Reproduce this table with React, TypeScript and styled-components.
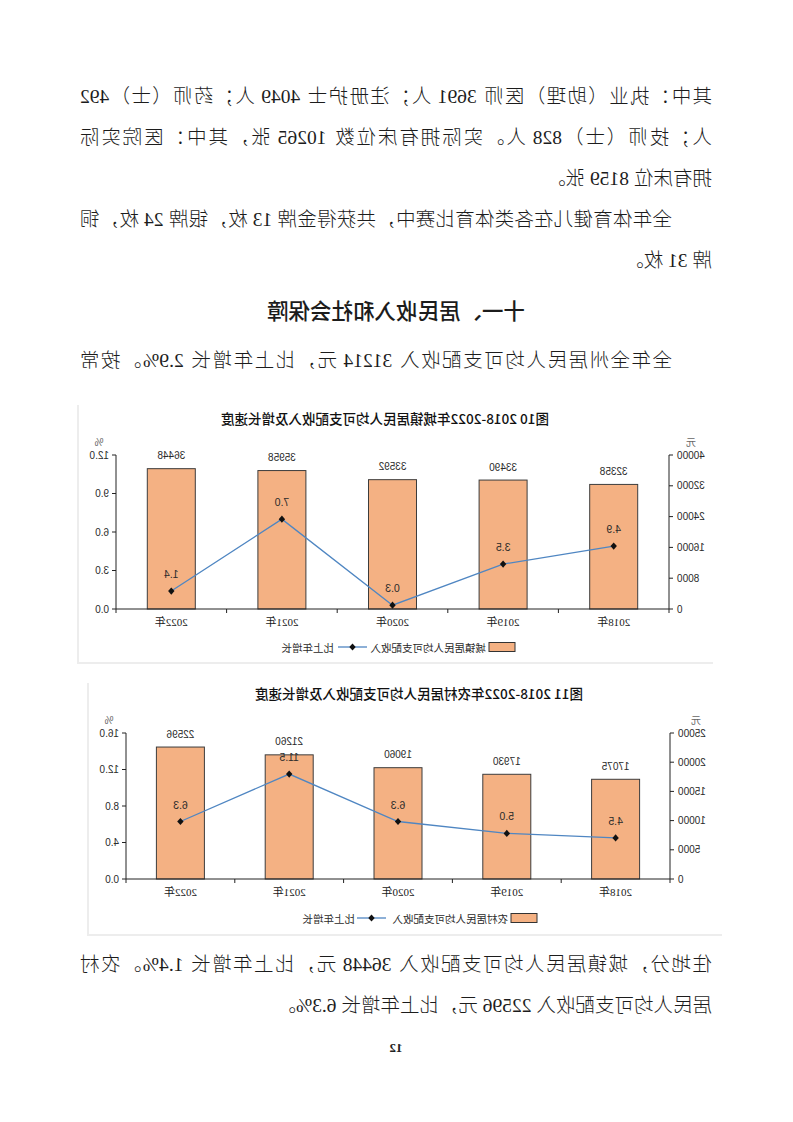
import React from 'react';
import styled, { createGlobalStyle } from 'styled-components';

const GlobalStyle = createGlobalStyle`
  html, body {
    margin: 0;
    padding: 0;
    background: #fff;
  }
`;

// the reference page is a horizontally mirrored scan, so the whole sheet is flipped
const Sheet = styled.div`
  width: 793px;
  height: 1122px;
  box-sizing: border-box;
  padding: 76px 80px 0 81px;
  background: #fff;
  transform: scaleX(-1);
  overflow: hidden;
  font-family: "Liberation Serif", "Noto Sans CJK SC", serif;
  color: #1c1c1c;
`;

const Line = styled.div<{ $full?: boolean; $indent?: boolean }>`
  font-size: 19.5px;
  font-weight: 300;
  line-height: 41px;
  height: 41px;
  text-align: ${p => (p.$full ? 'justify' : 'left')};
  text-align-last: ${p => (p.$full ? 'justify' : 'auto')};
  padding-left: ${p => (p.$indent ? '40px' : '0')};
`;

const Heading = styled.h2`
  margin: 8px 0 0;
  font-family: "Noto Sans CJK SC", sans-serif;
  font-size: 21.5px;
  font-weight: 500;
  line-height: 42px;
  text-align: center;
`;

const Block = styled.div<{ $gap?: number }>`
  margin-top: ${p => p.$gap ?? 0}px;
`;

const ChartFrame = styled.div<{ $w: number; $h: number; $shift: number; $gap: number }>`
  width: ${p => p.$w}px;
  height: ${p => p.$h}px;
  box-sizing: border-box;
  margin: ${p => p.$gap}px 0 0 ${p => p.$shift}px;
  border-right: 2px solid #ededed;
  border-bottom: 2px solid #ededed;
  svg {
    display: block;
  }
`;

const PageNumber = styled.div`
  margin-top: 12px;
  font-family: "Liberation Serif", serif;
  font-size: 13px;
  font-weight: 700;
  line-height: 20px;
  text-align: center;
  color: #222;
`;

const ChartTitle = styled.text`
  font-family: "Noto Sans CJK SC", sans-serif;
  font-size: 13.5px;
  font-weight: 500;
  fill: #111;
`;

const TickText = styled.text`
  font-family: "Liberation Sans", "Noto Sans CJK SC", sans-serif;
  font-size: 10px;
  fill: #2a2a2a;
`;

const YearText = styled.text`
  font-family: "Liberation Serif", "Noto Sans CJK SC", serif;
  font-size: 11px;
  font-weight: 400;
  fill: #1a1a1a;
`;

const LegendText = styled.text`
  font-family: "Noto Sans CJK SC", sans-serif;
  font-size: 10.5px;
  fill: #2a2a2a;
`;

type ChartSpec = {
  width: number;
  height: number;
  title: string;
  titleX: number;
  titleY: number;
  axisL: number;
  axisR: number;
  top: number;
  bottom: number;
  yuanMax: number;
  yuanStep: number;
  pctMax: number;
  pctStep: number;
  bars: number[];
  growth: number[];
  unitY: number;
  yuanUnitX: number;
  pctUnitX: number;
  xLabelY: number;
  legendY: number;
  swatchX: number;
  barLegendX: number;
  lineX: number;
  lineLegendX: number;
  barLegend: string;
};

const years = ['2018年', '2019年', '2020年', '2021年', '2022年'];
const BAR = '#f4b183';
const LINE = '#4f86c2';

const Diamond = ({ x, y }: { x: number; y: number }) => (
  <polygon points={`${x},${y - 3.6} ${x + 3.2},${y} ${x},${y + 3.6} ${x - 3.2},${y}`} fill="#111" />
);

const IncomeChart = ({ spec }: { spec: ChartSpec }) => {
  const s = spec;
  const cat = (s.axisR - s.axisL) / 5;
  const h = s.bottom - s.top;
  const cx = (i: number) => s.axisL + cat * (i + 0.5);
  const yYuan = (v: number) => s.bottom - (v / s.yuanMax) * h;
  const yPct = (v: number) => s.bottom - (v / s.pctMax) * h;
  const yuanTicks: number[] = [];
  for (let v = 0; v <= s.yuanMax; v += s.yuanStep) yuanTicks.push(v);
  const pctTicks: number[] = [];
  for (let v = 0; v <= s.pctMax + 0.001; v += s.pctStep) pctTicks.push(v);
  const pts = s.growth.map((g, i) => `${cx(i)},${yPct(g)}`).join(' ');

  return (
    <svg width={s.width - 2} height={s.height - 2}>
      <ChartTitle x={s.titleX} y={s.titleY} textAnchor="middle" dominantBaseline="central">
        {s.title}
      </ChartTitle>
      <TickText x={s.yuanUnitX} y={s.unitY} textAnchor="middle" dominantBaseline="central" style={{ fill: '#666' }}>
        元
      </TickText>
      <TickText x={s.pctUnitX} y={s.unitY} textAnchor="middle" dominantBaseline="central" style={{ fill: '#666' }}>
        %
      </TickText>

      {s.bars.map((v, i) => (
        <g key={i}>
          <rect x={cx(i) - 24} y={yYuan(v)} width={48} height={s.bottom - yYuan(v)} fill={BAR} stroke="#3c3c3c" strokeWidth={1} />
          <TickText x={cx(i)} y={yYuan(v) - 13} textAnchor="middle" dominantBaseline="central">
            {v}
          </TickText>
          <YearText x={cx(i)} y={s.xLabelY} textAnchor="middle" dominantBaseline="central">
            {years[i]}
          </YearText>
        </g>
      ))}

      <line x1={s.axisL} y1={s.top} x2={s.axisL} y2={s.bottom} stroke="#222" strokeWidth={1} />
      <line x1={s.axisR} y1={s.top} x2={s.axisR} y2={s.bottom} stroke="#222" strokeWidth={1} />
      <line x1={s.axisL} y1={s.bottom} x2={s.axisR} y2={s.bottom} stroke="#222" strokeWidth={1} />
      {[0, 1, 2, 3, 4, 5].map(i => (
        <line key={i} x1={s.axisL + cat * i} y1={s.bottom} x2={s.axisL + cat * i} y2={s.bottom + 4} stroke="#222" />
      ))}
      {yuanTicks.map(v => (
        <g key={v}>
          <line x1={s.axisL - 4} y1={yYuan(v)} x2={s.axisL} y2={yYuan(v)} stroke="#222" />
          <TickText x={s.axisL - 8} y={yYuan(v)} textAnchor="end" dominantBaseline="central">
            {v}
          </TickText>
        </g>
      ))}
      {pctTicks.map(v => (
        <g key={v}>
          <line x1={s.axisR} y1={yPct(v)} x2={s.axisR + 4} y2={yPct(v)} stroke="#222" />
          <TickText x={s.axisR + 7} y={yPct(v)} textAnchor="start" dominantBaseline="central">
            {v.toFixed(1)}
          </TickText>
        </g>
      ))}

      <polyline points={pts} fill="none" stroke={LINE} strokeWidth={1.3} />
      {s.growth.map((g, i) => (
        <g key={i}>
          <Diamond x={cx(i)} y={yPct(g)} />
          <TickText x={cx(i)} y={yPct(g) - 17} textAnchor="middle" dominantBaseline="central" style={{ fontSize: 10.5 }}>
            {g.toFixed(1)}
          </TickText>
        </g>
      ))}

      <rect x={s.swatchX} y={s.legendY - 4.5} width={26} height={9} fill={BAR} stroke="#333" strokeWidth={1} />
      <LegendText x={s.barLegendX} y={s.legendY} dominantBaseline="central">
        {s.barLegend}
      </LegendText>
      <line x1={s.lineX} y1={s.legendY} x2={s.lineX + 29} y2={s.legendY} stroke={LINE} strokeWidth={1.3} />
      <Diamond x={s.lineX + 14.5} y={s.legendY} />
      <LegendText x={s.lineLegendX} y={s.legendY} dominantBaseline="central">
        比上年增长
      </LegendText>
    </svg>
  );
};

const urban: ChartSpec = {
  width: 636,
  height: 259,
  title: '图10 2018-2022年城镇居民人均可支配收入及增长速度',
  titleX: 328,
  titleY: 13,
  axisL: 44,
  axisR: 597,
  top: 50,
  bottom: 204,
  yuanMax: 40000,
  yuanStep: 8000,
  pctMax: 12,
  pctStep: 3,
  bars: [32358, 33490, 33592, 35958, 36448],
  growth: [4.9, 3.5, 0.3, 7.0, 1.4],
  unitY: 37,
  yuanUnitX: 22,
  pctUnitX: 614,
  xLabelY: 217,
  legendY: 242,
  swatchX: 198,
  barLegendX: 227,
  lineX: 346,
  lineLegendX: 379,
  barLegend: '城镇居民人均可支配收入',
};

const rural: ChartSpec = {
  width: 635,
  height: 253,
  title: '图11 2018-2022年农村居民人均可支配收入及增长速度',
  titleX: 303,
  titleY: 10,
  axisL: 52,
  axisR: 596,
  top: 50,
  bottom: 196,
  yuanMax: 25000,
  yuanStep: 5000,
  pctMax: 16,
  pctStep: 4,
  bars: [17075, 17930, 19060, 21260, 22596],
  growth: [4.5, 5.0, 6.3, 11.5, 6.3],
  unitY: 37,
  yuanUnitX: 26,
  pctUnitX: 613,
  xLabelY: 209,
  legendY: 235,
  swatchX: 185,
  barLegendX: 214,
  lineX: 336,
  lineLegendX: 367,
  barLegend: '农村居民人均可支配收入',
};

export default function App() {
  return (
    <>
      <GlobalStyle />
      <Sheet>
        <Block>
          <Line $full>其中：执业（助理）医师 3691 人；注册护士 4049 人；药师（士）492</Line>
          <Line $full>人；技师（士）828 人。实际拥有床位数 10265 张，其中：医院实际</Line>
          <Line>拥有床位 8159 张。</Line>
        </Block>
        <Block>
          <Line $full $indent>全年体育健儿在各类体育比赛中，共获得金牌 13 枚，银牌 24 枚，铜</Line>
          <Line>牌 31 枚。</Line>
        </Block>
        <Heading>十一、居民收入和社会保障</Heading>
        <Block $gap={9}>
          <Line $full $indent>全年全州居民人均可支配收入 31214 元，比上年增长 2.9%。按常</Line>
        </Block>
        <ChartFrame $w={urban.width} $h={urban.height} $shift={-1} $gap={24}>
          <IncomeChart spec={urban} />
        </ChartFrame>
        <ChartFrame $w={rural.width} $h={rural.height} $shift={-10} $gap={19}>
          <IncomeChart spec={rural} />
        </ChartFrame>
        <Block $gap={8}>
          <Line $full>住地分，城镇居民人均可支配收入 36448 元，比上年增长 1.4%。农村</Line>
          <Line>居民人均可支配收入 22596 元，比上年增长 6.3%。</Line>
        </Block>
        <PageNumber>12</PageNumber>
      </Sheet>
    </>
  );
}
